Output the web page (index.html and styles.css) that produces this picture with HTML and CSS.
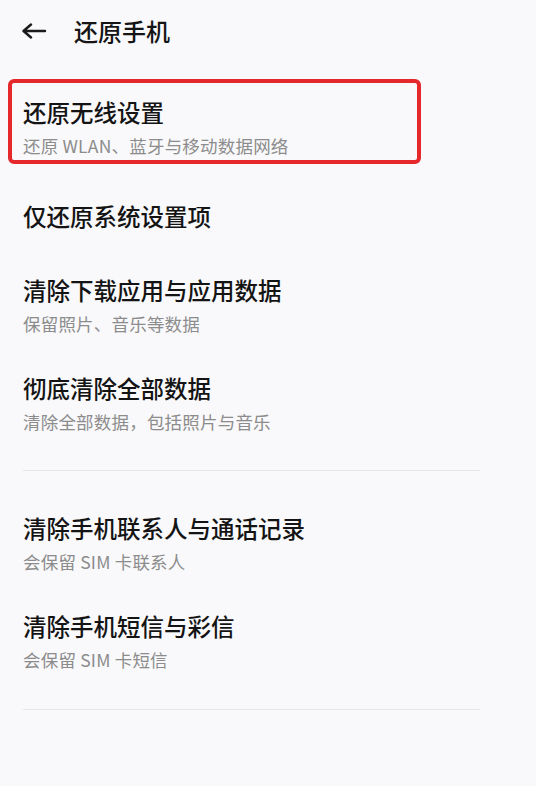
FILE: index.html
```html
<!DOCTYPE html>
<html lang="zh-CN">
<head>
    <meta charset="UTF-8">
    <meta name="viewport" content="width=device-width, initial-scale=1.0">
    <title>还原手机</title>
    <link rel="stylesheet" href="styles.css">
</head>
<body>
    <div class="page">
        <div class="top-bar">
            <span class="back-btn">
                <svg width="26" height="16" viewBox="0 0 26 16">
                    <path d="M24 8H3M10 1.5L2.5 8L10 14.5" fill="none" stroke="#1a1a1a" stroke-width="2.4" stroke-linecap="round" stroke-linejoin="round"/>
                </svg>
            </span>
            <h1>还原手机</h1>
        </div>

        <div class="settings-list">
            <div class="setting-item marked">
                <div class="item-title">还原无线设置</div>
                <div class="item-desc">还原 WLAN、蓝牙与移动数据网络</div>
                <span class="highlight-box"></span>
            </div>
            <div class="setting-item single">
                <div class="item-title">仅还原系统设置项</div>
            </div>
            <div class="setting-item">
                <div class="item-title">清除下载应用与应用数据</div>
                <div class="item-desc">保留照片、音乐等数据</div>
            </div>
            <div class="setting-item">
                <div class="item-title">彻底清除全部数据</div>
                <div class="item-desc">清除全部数据，包括照片与音乐</div>
            </div>
        </div>

        <div class="divider first"></div>

        <div class="settings-list second">
            <div class="setting-item">
                <div class="item-title">清除手机联系人与通话记录</div>
                <div class="item-desc">会保留 SIM 卡联系人</div>
            </div>
            <div class="setting-item">
                <div class="item-title">清除手机短信与彩信</div>
                <div class="item-desc">会保留 SIM 卡短信</div>
            </div>
        </div>

        <div class="divider last"></div>
    </div>
</body>
</html>
```

FILE: styles.css
```css
/* Base */
* {
    margin: 0;
    padding: 0;
    box-sizing: border-box;
    font-family: "Noto Sans CJK SC", "Noto Sans", sans-serif;
}

body {
    background-color: #f9f9fb;
    width: 536px;
    height: 786px;
    overflow: hidden;
}

.page {
    padding: 0 56px 0 23px;
}

/* Header */
.top-bar {
    height: 62px;
    display: flex;
    align-items: center;
}

.back-btn {
    display: flex;
    width: 53px;
    margin-left: -2px;
}

.top-bar h1 {
    font-size: 24px;
    font-weight: 500;
    color: #151515;
    line-height: 32px;
}

/* List */
.settings-list {
    padding-top: 16px;
}

.settings-list.second {
    padding-top: 23px;
}

.setting-item {
    position: relative;
    padding: 18px 0;
}

.setting-item.single {
    padding: 24px 0;
}

.item-title {
    font-size: 23.5px;
    font-weight: 500;
    color: #141414;
    line-height: 32px;
}

.item-desc {
    margin-top: 6px;
    font-size: 17.5px;
    letter-spacing: 0.2px;
    color: #8c8c8c;
    line-height: 24px;
}

/* red annotation frame around the first item */
.highlight-box {
    position: absolute;
    top: 1px;
    left: -15px;
    width: 413px;
    height: 85px;
    border: 4px solid #e5282b;
    border-radius: 6px;
}

.divider {
    height: 1px;
    background-color: #e6e6e8;
}

.divider.first {
    margin-top: 18px;
}

.divider.last {
    margin-top: 19px;
}
```
